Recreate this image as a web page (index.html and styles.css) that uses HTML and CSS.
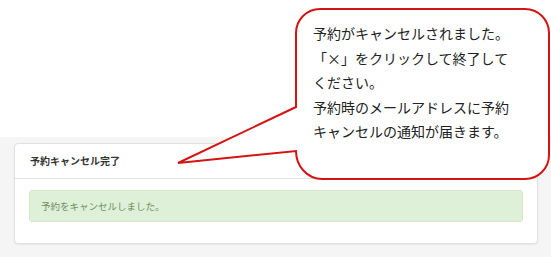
FILE: index.html
```html
<!DOCTYPE html>
<html>
<head>
<meta charset="utf-8">
<title>予約キャンセル完了</title>
<link rel="stylesheet" href="styles.css">
</head>
<body>
<div class="top-space"></div>
<div class="page">
<div class="panel">
<div class="panel-heading">予約キャンセル完了</div>
<div class="panel-body">
<div class="alert-success">予約をキャンセルしました。</div>
</div>
</div>
</div>
<div class="callout">
<svg class="callout-shape" width="551" height="257" viewBox="0 0 551 257">
<path d="M320 9 H525 A24 24 0 0 1 549 33 V155 A24 24 0 0 1 525 179 H322 A26 28 0 0 1 296 151 L178 163 L296 107 V33 A24 24 0 0 1 320 9 Z" fill="#fff" stroke="#d41313" stroke-width="2" stroke-linejoin="miter"/>
</svg>
<div class="callout-text">
予約がキャンセルされました。<br>
「×」をクリックして終了して<br>
ください。<br>
予約時のメールアドレスに予約<br>
キャンセルの通知が届きます。
</div>
</div>
</body>
</html>
```

FILE: styles.css
```css
body {
  margin: 0;
  font-family: "Noto Sans CJK JP", "Noto Sans", sans-serif;
  background-color: #fff;
  width: 551px;
  height: 257px;
  overflow: hidden;
  position: relative;
}

.top-space {
  height: 137px;
  background-color: #fff;
}

.page {
  background-color: #f5f5f5;
  height: 120px;
  padding: 6px 13px 0 14px;
  box-sizing: border-box;
}

.panel {
  background-color: #fff;
  border: 1px solid #e0e0e0;
  border-radius: 4px;
  box-shadow: 0 1px 2px rgba(0, 0, 0, 0.06);
}

.panel-heading {
  height: 34px;
  line-height: 34px;
  padding-left: 15px;
  font-size: 10px;
  font-weight: bold;
  color: #333;
  border-bottom: 1px solid #e3e3e3;
}

.panel-body {
  padding: 11px 14px 21px 14px;
}

.alert-success {
  height: 30px;
  line-height: 30px;
  padding-left: 11px;
  font-size: 9.5px;
  color: #6f8f60;
  background-color: #dff0d8;
  border: 1px solid #d6e9c6;
  border-radius: 3px;
}

.callout {
  position: absolute;
  left: 0;
  top: 0;
  width: 551px;
  height: 257px;
}

.callout-shape {
  position: absolute;
  left: 0;
  top: 0;
}

.callout-text {
  position: absolute;
  left: 313px;
  top: 21px;
  font-size: 14px;
  line-height: 24.5px;
  color: #222;
  white-space: nowrap;
}
```
